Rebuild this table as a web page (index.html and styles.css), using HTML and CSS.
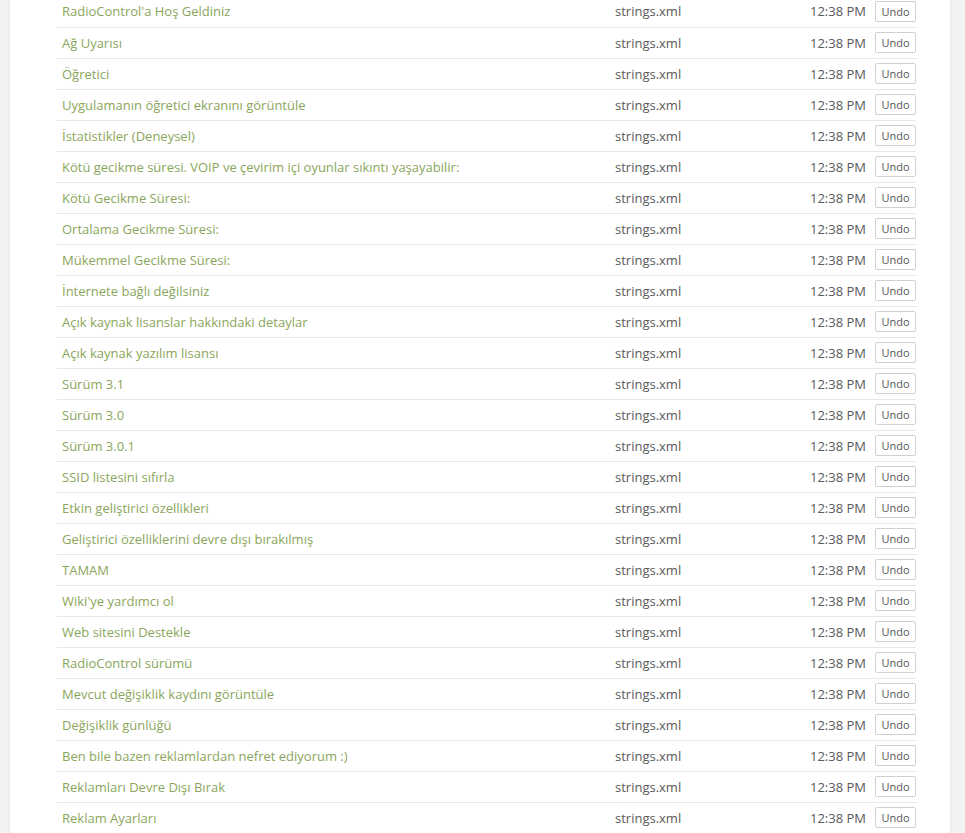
FILE: index.html
```html
<!DOCTYPE html>
<html lang="tr">
<head>
<meta charset="utf-8">
<title>Changes</title>
<link rel="stylesheet" href="styles.css">
</head>
<body>
<div class="panel">
<table class="changes">
<colgroup><col class="c-str"><col class="c-file"><col class="c-time"><col class="c-act"></colgroup>
<tbody>
<tr><td class="str">RadioControl'a Hoş Geldiniz</td><td class="file">strings.xml</td><td class="time">12:38 PM</td><td class="act"><button class="undo">Undo</button></td></tr>
<tr><td class="str">Ağ Uyarısı</td><td class="file">strings.xml</td><td class="time">12:38 PM</td><td class="act"><button class="undo">Undo</button></td></tr>
<tr><td class="str">Öğretici</td><td class="file">strings.xml</td><td class="time">12:38 PM</td><td class="act"><button class="undo">Undo</button></td></tr>
<tr><td class="str">Uygulamanın öğretici ekranını görüntüle</td><td class="file">strings.xml</td><td class="time">12:38 PM</td><td class="act"><button class="undo">Undo</button></td></tr>
<tr><td class="str">İstatistikler (Deneysel)</td><td class="file">strings.xml</td><td class="time">12:38 PM</td><td class="act"><button class="undo">Undo</button></td></tr>
<tr><td class="str">Kötü gecikme süresi. VOIP ve çevirim içi oyunlar sıkıntı yaşayabilir:</td><td class="file">strings.xml</td><td class="time">12:38 PM</td><td class="act"><button class="undo">Undo</button></td></tr>
<tr><td class="str">Kötü Gecikme Süresi:</td><td class="file">strings.xml</td><td class="time">12:38 PM</td><td class="act"><button class="undo">Undo</button></td></tr>
<tr><td class="str">Ortalama Gecikme Süresi:</td><td class="file">strings.xml</td><td class="time">12:38 PM</td><td class="act"><button class="undo">Undo</button></td></tr>
<tr><td class="str">Mükemmel Gecikme Süresi:</td><td class="file">strings.xml</td><td class="time">12:38 PM</td><td class="act"><button class="undo">Undo</button></td></tr>
<tr><td class="str">İnternete bağlı değilsiniz</td><td class="file">strings.xml</td><td class="time">12:38 PM</td><td class="act"><button class="undo">Undo</button></td></tr>
<tr><td class="str">Açık kaynak lisanslar hakkındaki detaylar</td><td class="file">strings.xml</td><td class="time">12:38 PM</td><td class="act"><button class="undo">Undo</button></td></tr>
<tr><td class="str">Açık kaynak yazılım lisansı</td><td class="file">strings.xml</td><td class="time">12:38 PM</td><td class="act"><button class="undo">Undo</button></td></tr>
<tr><td class="str">Sürüm 3.1</td><td class="file">strings.xml</td><td class="time">12:38 PM</td><td class="act"><button class="undo">Undo</button></td></tr>
<tr><td class="str">Sürüm 3.0</td><td class="file">strings.xml</td><td class="time">12:38 PM</td><td class="act"><button class="undo">Undo</button></td></tr>
<tr><td class="str">Sürüm 3.0.1</td><td class="file">strings.xml</td><td class="time">12:38 PM</td><td class="act"><button class="undo">Undo</button></td></tr>
<tr><td class="str">SSID listesini sıfırla</td><td class="file">strings.xml</td><td class="time">12:38 PM</td><td class="act"><button class="undo">Undo</button></td></tr>
<tr><td class="str">Etkin geliştirici özellikleri</td><td class="file">strings.xml</td><td class="time">12:38 PM</td><td class="act"><button class="undo">Undo</button></td></tr>
<tr><td class="str">Geliştirici özelliklerini devre dışı bırakılmış</td><td class="file">strings.xml</td><td class="time">12:38 PM</td><td class="act"><button class="undo">Undo</button></td></tr>
<tr><td class="str">TAMAM</td><td class="file">strings.xml</td><td class="time">12:38 PM</td><td class="act"><button class="undo">Undo</button></td></tr>
<tr><td class="str">Wiki'ye yardımcı ol</td><td class="file">strings.xml</td><td class="time">12:38 PM</td><td class="act"><button class="undo">Undo</button></td></tr>
<tr><td class="str">Web sitesini Destekle</td><td class="file">strings.xml</td><td class="time">12:38 PM</td><td class="act"><button class="undo">Undo</button></td></tr>
<tr><td class="str">RadioControl sürümü</td><td class="file">strings.xml</td><td class="time">12:38 PM</td><td class="act"><button class="undo">Undo</button></td></tr>
<tr><td class="str">Mevcut değişiklik kaydını görüntüle</td><td class="file">strings.xml</td><td class="time">12:38 PM</td><td class="act"><button class="undo">Undo</button></td></tr>
<tr><td class="str">Değişiklik günlüğü</td><td class="file">strings.xml</td><td class="time">12:38 PM</td><td class="act"><button class="undo">Undo</button></td></tr>
<tr><td class="str">Ben bile bazen reklamlardan nefret ediyorum :)</td><td class="file">strings.xml</td><td class="time">12:38 PM</td><td class="act"><button class="undo">Undo</button></td></tr>
<tr><td class="str">Reklamları Devre Dışı Bırak</td><td class="file">strings.xml</td><td class="time">12:38 PM</td><td class="act"><button class="undo">Undo</button></td></tr>
<tr><td class="str">Reklam Ayarları</td><td class="file">strings.xml</td><td class="time">12:38 PM</td><td class="act"><button class="undo">Undo</button></td></tr>
</tbody>
</table>
</div>
</body>
</html>
```
FILE: styles.css
```css
html, body {
  margin: 0;
  padding: 0;
  background: #f3f3f3;
  font-family: "Open Sans", "Noto Sans", sans-serif;
  overflow: hidden;
}
.panel {
  margin: 0 15px 0 10px;
  background: #fff;
  padding: 0 34px 0 47px;
  min-height: 900px;
  box-shadow: 0 0 4px rgba(0,0,0,0.06);
}
.changes {
  width: 859px;
  table-layout: fixed;
  border-collapse: collapse;
  margin-top: -4px;
  font-size: 13px;
}
.c-str { width: 553px; }
.c-file { width: 180px; }
.c-time { width: 81px; }
.c-act { width: 45px; }
.changes tr {
  border-bottom: 1px solid #e8e8e8;
  height: 31px;
}
.changes td {
  padding: 0 5px;
  height: 30px;
  vertical-align: middle;
  white-space: nowrap;
}
.str {
  color: #8aa65c;
}
.file {
  color: #5a5a5a;
}
.time {
  color: #5a5a5a;
  text-align: right;
}
.changes td.act {
  padding: 0;
}
.undo {
  display: block;
  margin-left: auto;
  width: 41px;
  font-family: "Open Sans", "Noto Sans", sans-serif;
  font-size: 11px;
  font-weight: 400;
  color: #555;
  background: #fff;
  border: 1px solid #d0d0d0;
  border-radius: 2px;
  height: 21px;
  padding: 0;
  line-height: 19px;
  text-align: center;
}
```
